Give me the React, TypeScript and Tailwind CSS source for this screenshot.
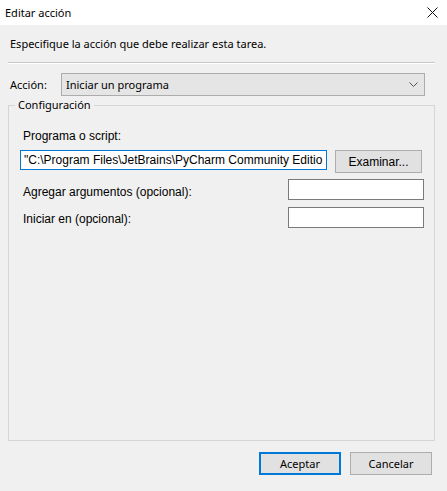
import React from "react";

const seg = { fontFamily: '"Noto Sans", "Open Sans", sans-serif' };
const ari = { fontFamily: '"Liberation Sans", Arial, sans-serif' };

export default function App() {
  return (
    <div className="w-[447px] h-[491px] bg-[#f0f0f0] flex flex-col text-[#000] overflow-hidden" style={seg}>
      <div className="h-[25px] bg-white flex items-center justify-between pl-[5px] pr-[8px]">
        <span className="text-[11px] leading-none">Editar acción</span>
        <svg width="11" height="11" viewBox="0 0 11 11" className="mr-[1px]">
          <path d="M0.5 0.5 L10.5 10.5 M10.5 0.5 L0.5 10.5" stroke="#111" strokeWidth="1" />
        </svg>
      </div>
      <div className="flex flex-col px-[8px]">
        <div className="h-[37px] flex items-center pl-[2px]">
          <span className="text-[11px] leading-none">Especifique la acción que debe realizar esta tarea.</span>
        </div>
        <div className="w-[427px] border-t border-[#c9c9c9] border-b border-b-white" />
        <div className="h-[40px] flex items-center pl-[2px] pt-[1px]">
          <span className="text-[11px] w-[51px] leading-none">Acción:</span>
          <div className="w-[364px] h-[23px] bg-[#e5e5e5] border border-[#acacac] flex items-center justify-between pl-[4px] pr-[6px]">
            <span className="text-[11px] leading-none">Iniciar un programa</span>
            <svg width="9" height="6" viewBox="0 0 9 6">
              <path d="M0.5 0.5 L4.5 4.5 L8.5 0.5" stroke="#555" strokeWidth="1" fill="none" />
            </svg>
          </div>
        </div>
        <div className="relative mt-[1px] w-[427px] h-[336px] border border-[#d5d5d5]">
          <span className="absolute left-[6px] top-[-9px] bg-[#f0f0f0] px-[3px] text-[11px] leading-[16px]">Configuración</span>
          <div className="flex flex-col pl-[11px] pr-[10px] pt-[23px]" style={ari}>
            <span className="text-[12px] leading-[14px] pl-[3px]">Programa o script:</span>
            <div className="flex items-start mt-[7px]">
              <div className="w-[307px] h-[20px] bg-white border border-[#0078d7] flex items-center pl-[3px] overflow-hidden whitespace-nowrap">
                <span className="text-[12px] leading-none">"C:\Program Files\JetBrains\PyCharm Community Editio</span>
              </div>
              <div className="ml-[8px] w-[87px] h-[23px] bg-[#e1e1e1] border border-[#adadad] flex items-center justify-center">
                <span className="text-[12px] leading-none">Examinar...</span>
              </div>
            </div>
            <div className="flex items-center justify-between mt-[6px] h-[21px]">
              <span className="text-[12px] leading-none pl-[3px] pt-[4px]">Agregar argumentos (opcional):</span>
              <div className="w-[136px] h-[21px] bg-white border border-[#7a7a7a]" />
            </div>
            <div className="flex items-center justify-between mt-[7px] h-[21px]">
              <span className="text-[12px] leading-none pl-[3px] pt-[2px]">Iniciar en (opcional):</span>
              <div className="w-[136px] h-[21px] bg-white border border-[#7a7a7a]" />
            </div>
          </div>
        </div>
        <div className="flex justify-end gap-[9px] mt-[11px] pr-[7px]">
          <div className="w-[82px] h-[23px] bg-[#e1e1e1] border-2 border-[#0078d7] flex items-center justify-center">
            <span className="text-[11px] leading-none">Aceptar</span>
          </div>
          <div className="w-[82px] h-[23px] bg-[#e1e1e1] border border-[#adadad] flex items-center justify-center">
            <span className="text-[11px] leading-none">Cancelar</span>
          </div>
        </div>
      </div>
    </div>
  );
}
